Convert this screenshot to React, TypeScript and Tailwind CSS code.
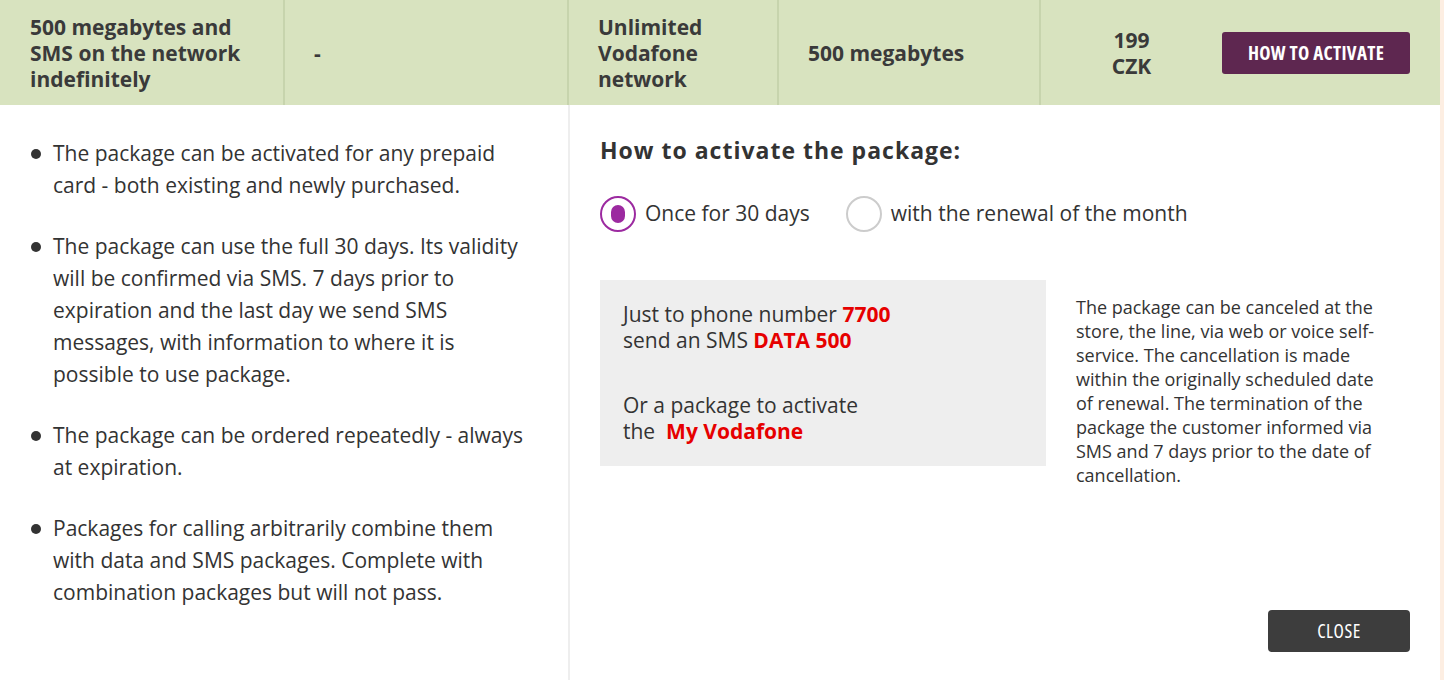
import { useState } from "react";

const bullets = [
  "The package can be activated for any prepaid card - both existing and newly purchased.",
  "The package can use the full 30 days. Its validity will be confirmed via SMS. 7 days prior to expiration and the last day we send SMS messages, with information to where it is possible to use package.",
  "The package can be ordered repeatedly - always at expiration.",
  "Packages for calling arbitrarily combine them with data and SMS packages. Complete with combination packages but will not pass.",
];

function Radio({ checked, label, onClick }: { checked: boolean; label: string; onClick: () => void }) {
  return (
    <button type="button" onClick={onClick} className="flex items-center gap-[9px] text-left">
      <span
        className={
          checked
            ? "flex size-9 items-center justify-center rounded-full border-2 border-[#9c2aa0]"
            : "flex size-9 items-center justify-center rounded-full border-2 border-[#cccccc]"
        }
      >
        {checked && <span className="h-[18px] w-[14px] rounded-full bg-[#9c2aa0]" />}
      </span>
      <span className="text-[21px] text-[#333333]">{label}</span>
    </button>
  );
}

export default function App() {
  const [mode, setMode] = useState<"once" | "renew">("once");

  return (
    <div className="flex w-[1444px] bg-[#fdeee2] font-['Open_Sans',sans-serif] text-[#333333]">
      <div className="w-[1440px] bg-white">
        {/* package row */}
        <div className="flex h-[105px] bg-[#d8e3bf] text-[21px] font-bold leading-[26px] text-[#3a3a3a]">
          <div className="flex w-[285px] items-center border-r-2 border-[#c7d4ad] pl-[30px] pr-4">
            500 megabytes and SMS on the network indefinitely
          </div>
          <div className="flex w-[284px] items-center border-r-2 border-[#c7d4ad] pl-[29px]">-</div>
          <div className="flex w-[210px] items-center border-r-2 border-[#c7d4ad] pl-[29px] pr-12">
            Unlimited Vodafone network
          </div>
          <div className="flex w-[262px] items-center border-r-2 border-[#c7d4ad] pl-[29px]">500 megabytes</div>
          <div className="flex flex-1 items-center pr-[30px]">
            <div className="flex-1 text-center">
              199
              <br />
              CZK
            </div>
            <button
              type="button"
              className="h-[42px] w-[188px] rounded-[3px] bg-[#5e2750] text-[19px] font-bold tracking-[0.3px] text-white [font-stretch:condensed]"
            >
              HOW TO ACTIVATE
            </button>
          </div>
        </div>

        <div className="flex h-[575px]">
          {/* conditions */}
          <ul className="w-[570px] border-r-2 border-[#eeeeee] pl-[30px] pr-8 pt-8 text-[21px] leading-[32px]">
            {bullets.map((b) => (
              <li key={b} className="mb-[29px] flex">
                <span className="mt-[12px] mr-[12px] ml-[1px] size-[10px] shrink-0 rounded-full bg-[#333333]" />
                <span>{b}</span>
              </li>
            ))}
          </ul>

          {/* activation */}
          <div className="flex flex-1 flex-col px-[30px] pt-[29px]">
            <h2 className="text-[23px] font-bold leading-[32px] tracking-[1px] text-[#333333]">
              How to activate the package:
            </h2>
            <div className="mt-[30px] flex items-center gap-[36px]">
              <Radio checked={mode === "once"} label="Once for 30 days" onClick={() => setMode("once")} />
              <Radio checked={mode === "renew"} label="with the renewal of the month" onClick={() => setMode("renew")} />
            </div>

            <div className="mt-[48px] flex gap-[30px]">
              <div className="h-[186px] w-[446px] bg-[#eeeeee] px-[23px] pt-[21px] text-[21px] leading-[26px] text-[#333333]">
                <p>
                  Just to phone number <span className="font-bold text-[#e60000]">7700</span>
                  <br />
                  send an SMS <span className="font-bold text-[#e60000]">DATA 500</span>
                </p>
                <p className="mt-[39px]">
                  Or a package to activate
                  <br />
                  the&nbsp; <span className="font-bold text-[#e60000]">My Vodafone</span>
                </p>
              </div>
              <p className="mt-[15px] w-[310px] text-[18px] leading-[24px] text-[#333333]">
                The package can be canceled at the store, the line, via web or voice self-service. The cancellation is
                made within the originally scheduled date of renewal. The termination of the package the customer
                informed via SMS and 7 days prior to the date of cancellation.
              </p>
            </div>

            <div className="mt-auto flex justify-end pb-[28px]">
              <button
                type="button"
                className="h-[42px] w-[142px] rounded-[4px] bg-[#3d3d3d] text-[19px] tracking-[0.5px] text-white [font-stretch:condensed]"
              >
                CLOSE
              </button>
            </div>
          </div>
        </div>
      </div>
    </div>
  );
}
